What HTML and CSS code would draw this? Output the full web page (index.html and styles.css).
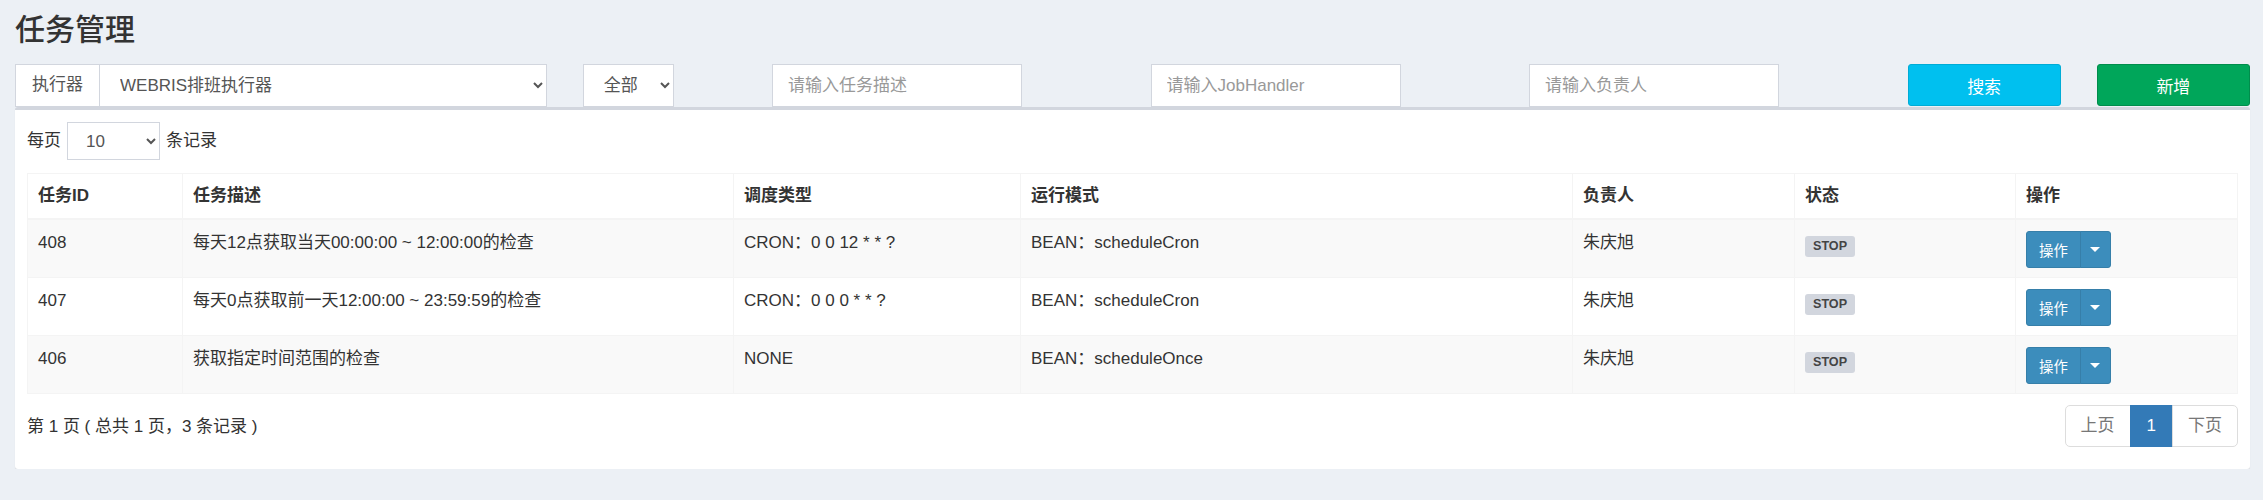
FILE: index.html
```html
<!DOCTYPE html>
<html lang="zh-CN">
<head>
<meta charset="utf-8">
<title>任务管理</title>
<link rel="stylesheet" href="styles.css">
</head>
<body>
<div class="page">
  <h1 class="page-title">任务管理</h1>

  <div class="filters">
    <div class="f-executor input-group">
      <span class="addon">执行器</span>
      <select class="ctl sel sel-executor"><option>WEBRIS排班执行器</option></select>
    </div>
    <div class="f-status">
      <select class="ctl sel sel-status"><option>全部</option></select>
    </div>
    <div class="f-text"><input class="ctl inp" type="text" placeholder="请输入任务描述"></div>
    <div class="f-text"><input class="ctl inp" type="text" placeholder="请输入JobHandler"></div>
    <div class="f-text"><input class="ctl inp" type="text" placeholder="请输入负责人"></div>
    <button class="btn btn-search">搜索</button>
    <button class="btn btn-add">新增</button>
  </div>

  <div class="box">
    <div class="length-row">
      <span>每页</span>
      <select class="sel sel-len"><option>10</option></select>
      <span>条记录</span>
    </div>

    <table class="jobs">
      <colgroup>
        <col class="c-id"><col class="c-desc"><col class="c-type"><col class="c-mode"><col class="c-author"><col class="c-status"><col class="c-op">
      </colgroup>
      <thead>
        <tr><th>任务ID</th><th>任务描述</th><th>调度类型</th><th>运行模式</th><th>负责人</th><th>状态</th><th>操作</th></tr>
      </thead>
      <tbody>
        <tr>
          <td>408</td><td>每天12点获取当天00:00:00 ~ 12:00:00的检查</td><td>CRON：0 0 12 * * ?</td><td>BEAN：scheduleCron</td><td>朱庆旭</td>
          <td><span class="label">STOP</span></td>
          <td><div class="op-group"><button class="op-btn">操作</button><button class="op-btn op-caret"><span class="caret"></span></button></div></td>
        </tr>
        <tr>
          <td>407</td><td>每天0点获取前一天12:00:00 ~ 23:59:59的检查</td><td>CRON：0 0 0 * * ?</td><td>BEAN：scheduleCron</td><td>朱庆旭</td>
          <td><span class="label">STOP</span></td>
          <td><div class="op-group"><button class="op-btn">操作</button><button class="op-btn op-caret"><span class="caret"></span></button></div></td>
        </tr>
        <tr>
          <td>406</td><td>获取指定时间范围的检查</td><td>NONE</td><td>BEAN：scheduleOnce</td><td>朱庆旭</td>
          <td><span class="label">STOP</span></td>
          <td><div class="op-group"><button class="op-btn">操作</button><button class="op-btn op-caret"><span class="caret"></span></button></div></td>
        </tr>
      </tbody>
    </table>

    <div class="table-foot">
      <div class="info">第 1 页 ( 总共 1 页，3 条记录 )</div>
      <ul class="pager">
        <li class="pg disabled">上页</li>
        <li class="pg active">1</li>
        <li class="pg disabled">下页</li>
      </ul>
    </div>
  </div>
</div>
</body>
</html>
```

FILE: styles.css
```css
* { box-sizing: border-box; }

html, body {
  margin: 0;
  padding: 0;
  background: #ecf0f5;
}

body {
  font-family: "Liberation Sans", "Noto Sans CJK SC", sans-serif;
  font-size: 17px;
  line-height: 1.42857;
  color: #333;
}

.page {
  padding: 13px 13px 0 15px;
}

.page-title {
  margin: 0;
  font-size: 30px;
  line-height: 33px;
  font-weight: 500;
  color: #333;
}

/* filter row */
.filters {
  margin-top: 18px;
  display: grid;
  grid-template-columns: repeat(12, 1fr);
  column-gap: 36px;
  height: 43px;
}

.f-executor { grid-column: span 3; }
.f-status { grid-column: span 1; }
.f-text { grid-column: span 2; }

.input-group {
  display: flex;
  height: 43px;
}

.addon {
  display: flex;
  align-items: center;
  padding: 0 16px;
  background: #fff;
  border: 1px solid #d2d6de;
  border-right: 0;
  color: #555;
  white-space: nowrap;
}

.ctl {
  height: 43px;
  border: 1px solid #d2d6de;
  border-radius: 0;
  background: #fff;
  font-family: inherit;
  font-size: 17px;
  color: #555;
  outline: none;
}

.sel {
  padding: 0 10px 0 16px;
}

.sel-executor {
  flex: 1;
  min-width: 0;
}

.sel-status {
  width: 91px;
}

.inp {
  width: 250px;
  padding: 0 15px;
}

.inp::placeholder {
  color: #999;
}

.btn {
  height: 42px;
  border-radius: 3px;
  font-family: inherit;
  font-size: 17px;
  color: #fff;
  cursor: pointer;
}

.btn-search {
  background: #00c0ef;
  border: 1px solid #00acd6;
}

.btn-add {
  background: #00a65a;
  border: 1px solid #008d4c;
}

/* box */
.box {
  background: #fff;
  border-top: 3px solid #d2d6de;
  border-radius: 3px;
  box-shadow: 0 1px 1px rgba(0, 0, 0, 0.1);
  padding: 12px 12px 22px 12px;
}

.length-row {
  display: flex;
  align-items: center;
  gap: 6px;
  height: 38px;
}

.sel-len {
  width: 93px;
  height: 38px;
  border: 1px solid #d2d6de;
  background: #fff;
  font-family: inherit;
  font-size: 17px;
  color: #555;
  padding: 0 8px 0 14px;
}

/* table */
.jobs {
  margin-top: 13px;
  width: 100%;
  table-layout: fixed;
  border-collapse: collapse;
  border: 1px solid #f4f4f4;
}

.c-id { width: 155px; }
.c-desc { width: 551px; }
.c-type { width: 287px; }
.c-mode { width: 552px; }
.c-author { width: 222px; }
.c-status { width: 221px; }
.c-op { width: 222px; }

.jobs th,
.jobs td {
  border: 1px solid #f4f4f4;
  text-align: left;
  vertical-align: top;
  line-height: 24px;
}

.jobs td {
  padding: 11px 10px 9px;
}

.jobs th {
  font-weight: bold;
  padding: 10px 10px 10px;
  border-bottom-width: 2px;
}

.jobs tbody tr:nth-child(odd) {
  background: #f9f9f9;
}

.label {
  display: inline-block;
  padding: 3px 8px 4px;
  font-size: 12.6px;
  line-height: 14px;
  font-weight: bold;
  color: #444;
  background: #d2d6de;
  border-radius: 3px;
  vertical-align: -2px;
}

.op-group {
  display: flex;
  height: 37px;
}

.op-btn {
  height: 37px;
  background: #3c8dbc;
  border: 1px solid #367fa9;
  color: #fff;
  font-family: inherit;
  font-size: 14.4px;
  padding: 0 12px;
  border-radius: 3px 0 0 3px;
}

.op-caret {
  width: 31px;
  padding: 0;
  margin-left: -1px;
  border-radius: 0 3px 3px 0;
  display: flex;
  align-items: center;
  justify-content: center;
}

.caret {
  width: 0;
  height: 0;
  border-top: 5px solid #fff;
  border-left: 5px solid transparent;
  border-right: 5px solid transparent;
}

/* footer */
.table-foot {
  margin-top: 11px;
  display: flex;
  justify-content: space-between;
  align-items: flex-start;
}

.info {
  padding-top: 10px;
}

.pager {
  list-style: none;
  margin: 0;
  padding: 0;
  display: flex;
}

.pg {
  padding: 8px 15px;
  line-height: 24px;
  border: 1px solid #ddd;
  margin-left: -1px;
  color: #777;
  background: #fff;
}

.pg:first-child {
  border-radius: 5px 0 0 5px;
  margin-left: 0;
}

.pg:last-child {
  border-radius: 0 5px 5px 0;
}

.pg.active {
  background: #337ab7;
  border-color: #337ab7;
  color: #fff;
  padding: 8px 16px;
}
```
